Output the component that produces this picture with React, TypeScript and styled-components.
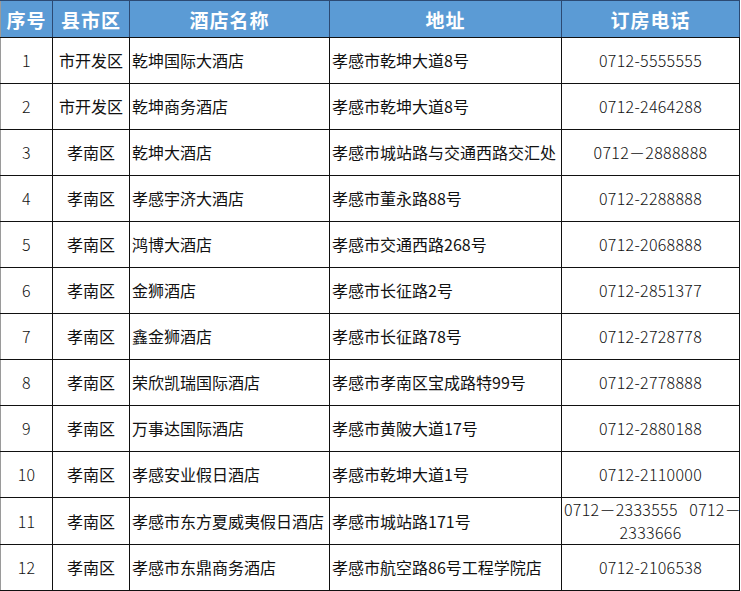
import React from 'react';
import styled, { createGlobalStyle } from 'styled-components';

interface Hotel {
  district: string;
  name: string;
  address: string;
  phone: string[];
}

const hotels: Hotel[] = [
  { district: '市开发区', name: '乾坤国际大酒店', address: '孝感市乾坤大道8号', phone: ['0712-5555555'] },
  { district: '市开发区', name: '乾坤商务酒店', address: '孝感市乾坤大道8号', phone: ['0712-2464288'] },
  { district: '孝南区', name: '乾坤大酒店', address: '孝感市城站路与交通西路交汇处', phone: ['0712－2888888'] },
  { district: '孝南区', name: '孝感宇济大酒店', address: '孝感市董永路88号', phone: ['0712-2288888'] },
  { district: '孝南区', name: '鸿博大酒店', address: '孝感市交通西路268号', phone: ['0712-2068888'] },
  { district: '孝南区', name: '金狮酒店', address: '孝感市长征路2号', phone: ['0712-2851377'] },
  { district: '孝南区', name: '鑫金狮酒店', address: '孝感市长征路78号', phone: ['0712-2728778'] },
  { district: '孝南区', name: '荣欣凯瑞国际酒店', address: '孝感市孝南区宝成路特99号', phone: ['0712-2778888'] },
  { district: '孝南区', name: '万事达国际酒店', address: '孝感市黄陂大道17号', phone: ['0712-2880188'] },
  { district: '孝南区', name: '孝感安业假日酒店', address: '孝感市乾坤大道1号', phone: ['0712-2110000'] },
  {
    district: '孝南区',
    name: '孝感市东方夏威夷假日酒店',
    address: '孝感市城站路171号',
    phone: ['0712－2333555\u00a0\u00a0\u00a00712－', '2333666'],
  },
  { district: '孝南区', name: '孝感市东鼎商务酒店', address: '孝感市航空路86号工程学院店', phone: ['0712-2106538'] },
];

const GlobalStyle = createGlobalStyle`
  body {
    margin: 0;
    background: #ffffff;
    font-family: "Noto Sans CJK SC", "Noto Sans", sans-serif;
  }
`;

const Table = styled.table`
  width: 739px;
  border-collapse: collapse;
  table-layout: fixed;
  border-left: 1px solid #9a9a9a;
`;

const HeadRow = styled.tr`
  height: 37px;
  background: #5b9bd5;
`;

const HeadCell = styled.th`
  padding: 0;
  color: #ffffff;
  font-size: 19px;
  font-weight: 700;
  letter-spacing: 1px;
  text-align: center;
  border-top: 1px solid #2c4a73;
  border-bottom: 1px solid #111111;
  border-right: 1px solid #2c4a73;
`;

const Row = styled.tr`
  height: 46px;
`;

const Cell = styled.td<{ $align?: 'left' | 'center' }>`
  padding: 0 2px;
  color: #111111;
  font-size: 16px;
  line-height: 21px;
  text-align: ${(p) => p.$align ?? 'center'};
  vertical-align: middle;
  white-space: nowrap;
  border-bottom: 1px solid #111111;
  border-right: 1px solid #111111;
`;

const Phone = styled(Cell)`
  font-weight: 300;
  letter-spacing: 0.3px;
`;

const PhoneLine = styled.div`
  line-height: 23px;
  height: 23px;
`;

const App: React.FC = () => {
  return (
    <>
      <GlobalStyle />
      <Table>
        <colgroup>
          <col style={{ width: 52 }} />
          <col style={{ width: 77 }} />
          <col style={{ width: 200 }} />
          <col style={{ width: 232 }} />
          <col style={{ width: 178 }} />
        </colgroup>
        <thead>
          <HeadRow>
            <HeadCell>序号</HeadCell>
            <HeadCell>县市区</HeadCell>
            <HeadCell>酒店名称</HeadCell>
            <HeadCell>地址</HeadCell>
            <HeadCell>订房电话</HeadCell>
          </HeadRow>
        </thead>
        <tbody>
          {hotels.map((h, i) => (
            <Row key={i}>
              <Phone>{i + 1}</Phone>
              <Cell>{h.district}</Cell>
              <Cell $align="left">{h.name}</Cell>
              <Cell $align="left">{h.address}</Cell>
              <Phone>
                {h.phone.length > 1
                  ? h.phone.map((line) => <PhoneLine key={line}>{line}</PhoneLine>)
                  : h.phone[0]}
              </Phone>
            </Row>
          ))}
        </tbody>
      </Table>
    </>
  );
};

export default App;
